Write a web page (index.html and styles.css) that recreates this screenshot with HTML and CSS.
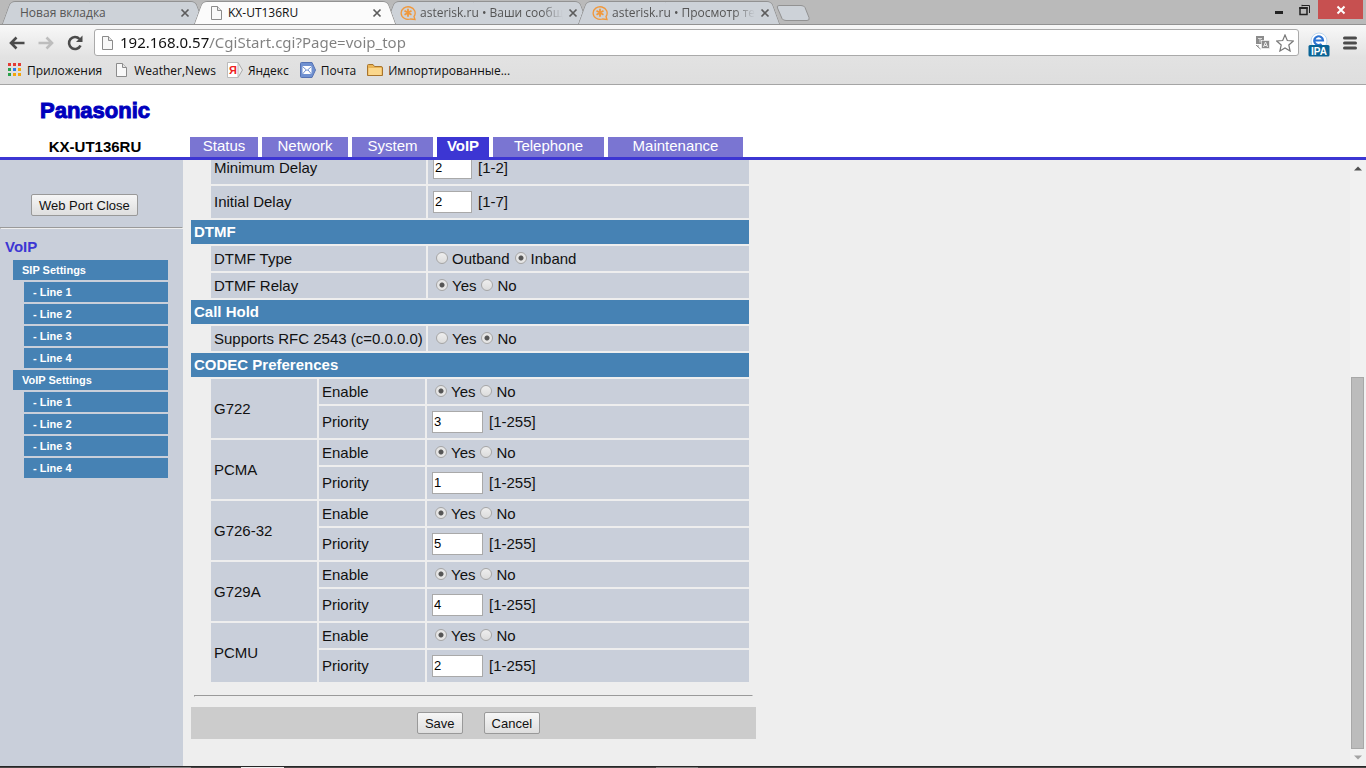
FILE: index.html
```html
<!DOCTYPE html>
<html lang="ru">
<head>
    <meta charset="UTF-8">
    <meta name="viewport" content="width=device-width, initial-scale=1.0">
    <title>KX-UT136RU</title>
    <link rel="stylesheet" href="styles.css">
</head>
<body>
    <!-- Reused icons -->
    <svg class="defs" width="0" height="0" aria-hidden="true">
        <symbol id="page" viewBox="0 0 16 16">
            <path d="M3.5 1.5h6l4 4v9h-10z" fill="#f8f8f8" stroke="#8b8b8b"/>
            <path d="M9.5 1.5v4h4" fill="#e4e4e4" stroke="#8b8b8b"/>
        </symbol>
        <symbol id="close" viewBox="0 0 12 12">
            <path d="M2.5 2.5l7 7M9.5 2.5l-7 7" stroke="#5c5c5c" stroke-width="1.7"/>
        </symbol>
        <symbol id="asterisk" viewBox="0 0 16 16">
            <path d="M10.500 14A7 6.300 0 1 1 14 11.500L15 14.500z" fill="none" stroke="#f0983c" stroke-width="1.300"/>
            <path d="M8 3.800v8M4.500 5.800l7 4M11.500 5.800l-7 4" stroke="#f0983c" stroke-width="1.800"/>
        </symbol>
    </svg>

    <div class="tab-strip">
        <div class="tab">
            <span class="tab-title">Новая вкладка</span>
            <button class="tab-close" aria-label="Закрыть"><svg width="12" height="12"><use href="#close"/></svg></button>
        </div>
        <div class="tab active">
            <svg width="16" height="16"><use href="#page"/></svg>
            <span class="tab-title">KX-UT136RU</span>
            <button class="tab-close" aria-label="Закрыть"><svg width="12" height="12"><use href="#close"/></svg></button>
        </div>
        <div class="tab">
            <svg width="16" height="16"><use href="#asterisk"/></svg>
            <span class="tab-title fade">asterisk.ru • Ваши сообщ</span>
            <button class="tab-close" aria-label="Закрыть"><svg width="12" height="12"><use href="#close"/></svg></button>
        </div>
        <div class="tab">
            <svg width="16" height="16"><use href="#asterisk"/></svg>
            <span class="tab-title fade">asterisk.ru • Просмотр те</span>
            <button class="tab-close" aria-label="Закрыть"><svg width="12" height="12"><use href="#close"/></svg></button>
        </div>
        <button class="new-tab" aria-label="Новая вкладка">
            <svg width="34" height="16" viewBox="0 0 34 16"><path d="M3 .5h22q3 0 4 2l4 10q1 3-2 3H10q-3 0-4-2L1.500 3Q.5.5 3 .5z" fill="#cdd2d8" stroke="#929292"/></svg>
        </button>
        <div class="window-buttons">
            <button class="win-btn" aria-label="Свернуть"><svg width="12" height="12"><path d="M2 8.500h8" stroke="#222" stroke-width="3"/></svg></button>
            <button class="win-btn" aria-label="Развернуть"><svg width="12" height="12"><path d="M3 1.500h7.500v7.500M3 .8v1.500" fill="none" stroke="#222"/><rect x="1" y="4" width="7" height="6.500" fill="none" stroke="#222" stroke-width="1.500"/><path d="M.3 4h8.400" stroke="#222" stroke-width="2"/></svg></button>
            <button class="win-btn win-close" aria-label="Закрыть"><svg width="12" height="12"><path d="M2.500 2.500l7 7M9.500 2.500l-7 7" stroke="#fff" stroke-width="2"/></svg></button>
        </div>
    </div>

    <div class="toolbar">
        <div class="nav-row">
            <button class="icon-btn" aria-label="Назад"><svg width="16" height="16"><path d="M15.500 8H2M7.500 2.500L2 8l5.500 5.500" fill="none" stroke="#4b4b4b" stroke-width="2.600"/></svg></button>
            <button class="icon-btn" aria-label="Вперёд"><svg width="16" height="16"><path d="M.5 8H14M8.500 2.500L14 8l-5.500 5.500" fill="none" stroke="#bdbdbd" stroke-width="2.600"/></svg></button>
            <button class="icon-btn" aria-label="Обновить"><svg width="16" height="16"><path d="M13.500 10.500A6 6 0 1 1 12.500 4" fill="none" stroke="#4b4b4b" stroke-width="2.600"/><path d="M15.500.5v6.500H9z" fill="#4b4b4b"/></svg></button>
            <div class="address">
                <svg width="16" height="18" viewBox="0 0 16 16"><use href="#page"/></svg>
                <input type="text" class="url" aria-label="Адрес" value="192.168.0.57/CgiStart.cgi?Page=voip_top">
                <button class="icon-btn" aria-label="Перевести"><svg width="16" height="16"><rect x="1" y="1" width="8" height="8" fill="#8c8c8c"/><path d="M3 3.500h4M5 3.500v4" stroke="#ddd"/><rect x="6.500" y="5.500" width="8" height="8" fill="#8c8c8c" stroke="#fff" stroke-width=".6"/><path d="M8.500 12l2-5 2 5M9.300 10.500h2.400" fill="none" stroke="#eee"/><path d="M1 10l2 2v-2M3 12l2.500 2" fill="none" stroke="#8c8c8c"/></svg></button>
                <button class="icon-btn" aria-label="Добавить в закладки"><svg width="18" height="18"><path d="M9 1l2.300 5.500 6 .5-4.500 4 1.300 6L9 14l-5.100 3 1.300-6L.7 7l6-.5z" fill="#fff" stroke="#777" stroke-width="1.200"/></svg></button>
            </div>
            <button class="icon-btn" aria-label="IPA"><svg width="22" height="28" viewBox="0 -4 22 28"><circle cx="11" cy="8" r="8" fill="#fff" stroke="#bcd7ee"/><path d="M6.500 7.500h8.500A4.400 4.400 0 1 0 13.500 11" fill="none" stroke="#2c73d2" stroke-width="2.200"/><rect x=".5" y="12" width="21" height="11.500" rx="1.500" fill="#0a6496"/><text x="11" y="21.500" class="ipa">IPA</text></svg></button>
            <button class="icon-btn" aria-label="Меню"><svg width="14" height="16"><path d="M1.500 3h11M1.500 8h11M1.500 13h11" stroke="#4b4b4b" stroke-width="3" stroke-linecap="round"/></svg></button>
        </div>
        <div class="bookmarks">
            <a href="#"><svg width="14" height="14"><path d="M0 0h3v3H0zM5 0h3v3H5zM10 0h3v3h-3z" fill="#e33b34"/><path d="M0 5h3v3H0zM0 10h3v3H0z" fill="#2ba14b"/><path d="M5 5h3v3H5z" fill="#2c7bea"/><path d="M10 5h3v3h-3zM5 10h3v3H5zM10 10h3v3h-3z" fill="#f2a60d"/></svg>Приложения</a>
            <a href="#"><svg width="16" height="16"><use href="#page"/></svg>Weather,News</a>
            <a href="#"><svg width="16" height="16"><path d="M1.500.5H11l4.500 7.500-4.500 7.500H1.500q-1 0-1-1v-13q0-1 1-1z" fill="#eee" stroke="#a9a9a9"/><path d="M11 .5V15.500H.5V.5z" fill="#fff" stroke="#bbb"/><text x="6" y="12" class="ya">Я</text></svg>Яндекс</a>
            <a href="#"><svg width="16" height="16"><path d="M1.500.5H12l3.500 7.500-3.500 7.500H1.500q-1 0-1-1v-13q0-1 1-1z" fill="#6f90d0" stroke="#5572b3"/><path d="M2.500 4h9v8h-9z" fill="#fff"/><path d="M2.500 4.500l4.500 4 4.500-4M2.500 12l3.500-4M11.500 12L8 8" fill="none" stroke="#6f90d0"/></svg>Почта</a>
            <a href="#"><svg width="16" height="16"><path d="M.5 3.500q0-1 1-1H6l1.500 2H14q1.500 0 1.500 1.500v7.500h-15z" fill="#e9b456" stroke="#a8742c"/><path d="M1.500 6h13v7h-13z" fill="#fbd78c"/></svg>Импортированные...</a>
        </div>
    </div>

    <header class="page-header">
        <div class="brand">
            <div class="logo">Panasonic</div>
            <div class="model">KX-UT136RU</div>
        </div>
        <nav class="main-nav">
            <a href="#">Status</a>
            <a href="#">Network</a>
            <a href="#">System</a>
            <a href="#" class="current">VoIP</a>
            <a href="#">Telephone</a>
            <a href="#">Maintenance</a>
        </nav>
    </header>

    <div class="page-body">
        <aside class="sidebar">
            <div class="port-close"><button class="btn">Web Port Close</button></div>
            <hr>
            <div class="menu-title">VoIP</div>
            <ul class="menu">
                <li><a href="#">SIP Settings</a></li>
                <li class="sub"><a href="#">- Line 1</a></li>
                <li class="sub"><a href="#">- Line 2</a></li>
                <li class="sub"><a href="#">- Line 3</a></li>
                <li class="sub"><a href="#">- Line 4</a></li>
                <li><a href="#">VoIP Settings</a></li>
                <li class="sub"><a href="#">- Line 1</a></li>
                <li class="sub"><a href="#">- Line 2</a></li>
                <li class="sub"><a href="#">- Line 3</a></li>
                <li class="sub"><a href="#">- Line 4</a></li>
            </ul>
        </aside>

        <main class="content">
            <form class="settings">
                <table>
                    <tr class="tall"><td class="name"><label for="min-delay">Minimum Delay</label></td><td><input type="text" class="short" id="min-delay" value="2"><span class="range">[1-2]</span></td></tr>
                    <tr class="tall"><td class="name"><label for="init-delay">Initial Delay</label></td><td><input type="text" class="short" id="init-delay" value="2"><span class="range">[1-7]</span></td></tr>
                </table>

                <h2>DTMF</h2>
                <table>
                    <tr><td class="name">DTMF Type</td><td><label><input type="radio" name="dtmf-type">Outband</label><label><input type="radio" name="dtmf-type" checked>Inband</label></td></tr>
                    <tr><td class="name">DTMF Relay</td><td><label><input type="radio" name="dtmf-relay" checked>Yes</label><label><input type="radio" name="dtmf-relay">No</label></td></tr>
                </table>

                <h2>Call Hold</h2>
                <table>
                    <tr><td class="name">Supports RFC 2543 (c=0.0.0.0)</td><td><label><input type="radio" name="rfc2543">Yes</label><label><input type="radio" name="rfc2543" checked>No</label></td></tr>
                </table>

                <h2>CODEC Preferences</h2>
                <table>
                    <tr><td class="codec" rowspan="2">G722</td><td class="option">Enable</td><td><label><input type="radio" name="g722" checked>Yes</label><label><input type="radio" name="g722">No</label></td></tr>
                    <tr class="tall"><td class="option"><label for="g722-priority">Priority</label></td><td><input type="text" id="g722-priority" value="3"><span class="range">[1-255]</span></td></tr>
                    <tr><td class="codec" rowspan="2">PCMA</td><td class="option">Enable</td><td><label><input type="radio" name="pcma" checked>Yes</label><label><input type="radio" name="pcma">No</label></td></tr>
                    <tr class="tall"><td class="option"><label for="pcma-priority">Priority</label></td><td><input type="text" id="pcma-priority" value="1"><span class="range">[1-255]</span></td></tr>
                    <tr><td class="codec" rowspan="2">G726-32</td><td class="option">Enable</td><td><label><input type="radio" name="g726" checked>Yes</label><label><input type="radio" name="g726">No</label></td></tr>
                    <tr class="tall"><td class="option"><label for="g726-priority">Priority</label></td><td><input type="text" id="g726-priority" value="5"><span class="range">[1-255]</span></td></tr>
                    <tr><td class="codec" rowspan="2">G729A</td><td class="option">Enable</td><td><label><input type="radio" name="g729" checked>Yes</label><label><input type="radio" name="g729">No</label></td></tr>
                    <tr class="tall"><td class="option"><label for="g729-priority">Priority</label></td><td><input type="text" id="g729-priority" value="4"><span class="range">[1-255]</span></td></tr>
                    <tr><td class="codec" rowspan="2">PCMU</td><td class="option">Enable</td><td><label><input type="radio" name="pcmu" checked>Yes</label><label><input type="radio" name="pcmu">No</label></td></tr>
                    <tr class="tall"><td class="option"><label for="pcmu-priority">Priority</label></td><td><input type="text" id="pcmu-priority" value="2"><span class="range">[1-255]</span></td></tr>
                </table>

                <hr>
                <div class="actions">
                    <button type="button" class="btn">Save</button>
                    <button type="button" class="btn">Cancel</button>
                </div>
            </form>
        </main>

        <div class="scrollbar">
            <svg width="8" height="5"><path d="M0 4.500L4 .5l4 4z" fill="#505050"/></svg>
            <div class="track"><div class="thumb"></div></div>
            <svg width="8" height="5"><path d="M0 .5L4 4.500l4-4z" fill="#a3a3a3"/></svg>
        </div>
    </div>

    <div class="taskbar"></div>
</body>
</html>
```

FILE: styles.css
```css
* {
    box-sizing: border-box;
}

body {
    margin: 0;
    height: 100vh;
    display: flex;
    flex-direction: column;
    overflow: hidden;
    background-color: #eee;
    color: #111;
    font: 15px "Liberation Sans", Arial, sans-serif;
}

svg {
    display: block;
    flex: none;
}

.defs {
    position: absolute;
}

a {
    color: inherit;
    text-decoration: none;
}

button {
    font-family: inherit;
    color: inherit;
}

.icon-btn, .tab-close, .new-tab, .win-btn {
    padding: 0;
    border: none;
    background: none;
}

/* Browser tabs */
.tab-strip {
    display: flex;
    flex: none;
    height: 24px;
    padding-top: 1px;
    background-color: #bababa;
    font: 12px "Open Sans", "Noto Sans", sans-serif;
}

.tab {
    position: relative;
    isolation: isolate;
    display: flex;
    align-items: center;
    gap: 4px;
    width: 206px;
    margin-right: -14px;
    padding: 0 15px 0 16px;
    color: #555;
}

.tab:first-child {
    padding-left: 20px;
}

.tab.active {
    z-index: 2;
    color: #111;
}

.tab::before, .tab::after {
    content: "";
    position: absolute;
    z-index: -1;
    top: 0;
    bottom: 0;
    background-color: #cdd2d8;
    border: 1px solid #929292;
    border-bottom: none;
}

.tab::before {
    left: 6px;
    right: 50%;
    border-right: none;
    border-radius: 5px 0 0 0;
    transform: skewX(-20deg);
}

.tab::after {
    left: 45%;
    right: 6px;
    border-left: none;
    border-radius: 0 5px 0 0;
    transform: skewX(20deg);
}

.tab.active::before, .tab.active::after {
    background-color: #fbfbfb;
}

.tab-title {
    flex: 1;
    white-space: nowrap;
}

.tab-title.fade {
    -webkit-mask-image: linear-gradient(to right, #000 85%, transparent);
    mask-image: linear-gradient(to right, #000 85%, transparent);
}

.new-tab {
    align-self: center;
    margin-left: 8px;
}

.window-buttons {
    display: flex;
    margin-left: auto;
    margin-right: 3px;
    margin-top: -1px;
    height: 19px;
}

.win-btn {
    display: grid;
    place-items: center;
    width: 26px;
}

.win-close {
    width: 45px;
    background-color: #c75050;
}

/* Toolbar */
.toolbar {
    flex: none;
    height: 61px;
    border-top: 1px solid #929292;
    border-bottom: 1px solid #a5a5a5;
    background: linear-gradient(#f8f8f8, #e2e2e2 55%, #dedede);
}

.nav-row {
    display: flex;
    align-items: center;
    gap: 13px;
    height: 35px;
    padding: 0 9px;
}

.address {
    flex: 1;
    display: flex;
    align-items: center;
    gap: 5px;
    height: 27px;
    margin-left: -2px;
    margin-right: -4px;
    padding: 0 4px;
    border: 1px solid #aaa;
    border-radius: 3px;
    background-color: #fff;
}

/* host part is dark, path is grey */
.url {
    flex: 1;
    border: none;
    outline: none;
    padding: 0 0 1px;
    font: 15px "Noto Sans", "Open Sans", sans-serif;
    color: transparent;
    background: linear-gradient(to right, #111 90px, #808080 90px);
    -webkit-background-clip: text;
    background-clip: text;
}

.ipa {
    font: bold 10px "Liberation Sans", Arial, sans-serif;
    fill: #fff;
    text-anchor: middle;
}

.ya {
    font: bold 11px "Liberation Sans", Arial, sans-serif;
    fill: #e22;
    text-anchor: middle;
}

.bookmarks {
    display: flex;
    align-items: center;
    gap: 11px;
    height: 20px;
    padding: 0 8px;
    font: 12px "Open Sans", "Noto Sans", sans-serif;
}

.bookmarks a {
    display: flex;
    align-items: center;
    gap: 5px;
}

/* Page header */
.page-header {
    display: flex;
    flex: none;
    align-items: flex-end;
    height: 75px;
    background-color: #fff;
    border-bottom: 3px solid #3c36d3;
}

.brand {
    width: 190px;
    text-align: center;
}

.logo {
    margin-bottom: 14px;
    line-height: 24px;
    font-size: 22px;
    font-weight: bold;
    color: #0000bd;
    -webkit-text-stroke: 1px #0000bd;
}

.model {
    line-height: 20px;
    font-weight: bold;
    color: #000;
}

.main-nav {
    display: grid;
    grid-template-columns: 68px 86px 81px 52px 111px 135px;
    gap: 4px;
    line-height: 18px;
    text-align: center;
    color: #fff;
}

.main-nav a {
    height: 20px;
    background-color: #7a75d2;
}

.main-nav .current {
    background-color: #3c36d3;
    font-weight: bold;
}

.page-body {
    flex: 1;
    display: flex;
    min-height: 0;
}

/* Sidebar */
.sidebar {
    width: 183px;
    background-color: #c9cfda;
}

.port-close {
    padding: 34px 31px 11px;
}

.btn {
    height: 22px;
    padding: 0 7px;
    border: 1px solid #999;
    border-radius: 2px;
    background: linear-gradient(#f6f6f6, #dedede);
    font-size: 13px;
    white-space: nowrap;
}

hr {
    margin: 0;
    border: 1px inset #eee;
}

.menu-title {
    padding: 8px 5px 4px;
    line-height: 19px;
    font-weight: bold;
    color: #3c36d3;
}

.menu {
    display: grid;
    gap: 2px;
    margin: 0;
    padding: 0 15px 0 13px;
    list-style: none;
    font-size: 11px;
    font-weight: bold;
    line-height: 20px;
    color: #fff;
}

.menu a {
    display: block;
    padding-left: 9px;
    background-color: #4682b4;
}

.sub {
    padding-left: 11px;
}

/* Settings, scrolled to the end */
.content {
    flex: 1;
    display: flex;
    flex-direction: column;
    justify-content: flex-end;
    overflow: hidden;
    padding: 0 8px 27px;
}

.settings {
    width: 565px;
}

.settings h2 {
    width: 558px;
    margin: 0;
    padding-left: 3px;
    font-size: 15px;
    line-height: 24px;
    color: #fff;
    background-color: #4682b4;
}

.settings table {
    width: 542px;
    margin-left: 18px;
    border-spacing: 2px;
    table-layout: fixed;
}

.settings td {
    height: 25px;
    padding: 0 3px;
    background-color: #c9cfda;
    white-space: nowrap;
}

.settings .tall td:not(.codec) {
    height: 32px;
    padding-bottom: 1px;
}

.settings .name {
    width: 215px;
}

.settings .codec, .settings .option {
    width: 106px;
}

.settings td:last-child {
    padding-left: 5px;
}

.settings td:last-child label {
    margin-right: 2px;
}

.settings input[type="radio"] {
    appearance: none;
    width: 12px;
    height: 12px;
    margin: 0 4px 0 3px;
    border: 1px solid #a6a6a6;
    border-radius: 50%;
    background: linear-gradient(#eee, #dcdcdc);
    vertical-align: 0;
}

.settings input[type="radio"]:checked {
    background: radial-gradient(circle, #555 0 2px, #e6e6e6 3px);
}

.settings input[type="text"] {
    width: 51px;
    height: 22px;
    padding: 0 1px;
    border: 1px solid #a9a9a9;
    background-color: #fff;
    font: 13px "Liberation Sans", Arial, sans-serif;
    vertical-align: middle;
}

.settings input.short {
    width: 39px;
}

.range {
    margin-left: 6px;
    vertical-align: middle;
}

.settings hr {
    margin: 11px 3px 10px;
}

.actions {
    display: flex;
    justify-content: center;
    align-items: center;
    gap: 21px;
    height: 32px;
    padding-left: 10px;
    background-color: #ccc;
}

/* Scrollbar */
.scrollbar {
    display: flex;
    flex-direction: column;
    align-items: center;
    gap: 6px;
    width: 16px;
    padding: 6px 2px 6px 1px;
    background-color: #f1f1f1;
}

.track {
    flex: 1;
    display: flex;
    align-items: flex-end;
    width: 100%;
}

.thumb {
    width: 100%;
    height: 65%;
    border: 1px solid #a8a8a8;
    background-color: #bcbcbc;
}

.taskbar {
    flex: none;
    height: 2px;
    border-top: 1px solid #262626;
    background: linear-gradient(to right, #4c4848 150px, #858282 150px 191px, #4c4848 191px 241px, #eee 241px 284px, #4c4848 284px 656px, #858282 656px 698px, #4c4848 698px);
}
```
